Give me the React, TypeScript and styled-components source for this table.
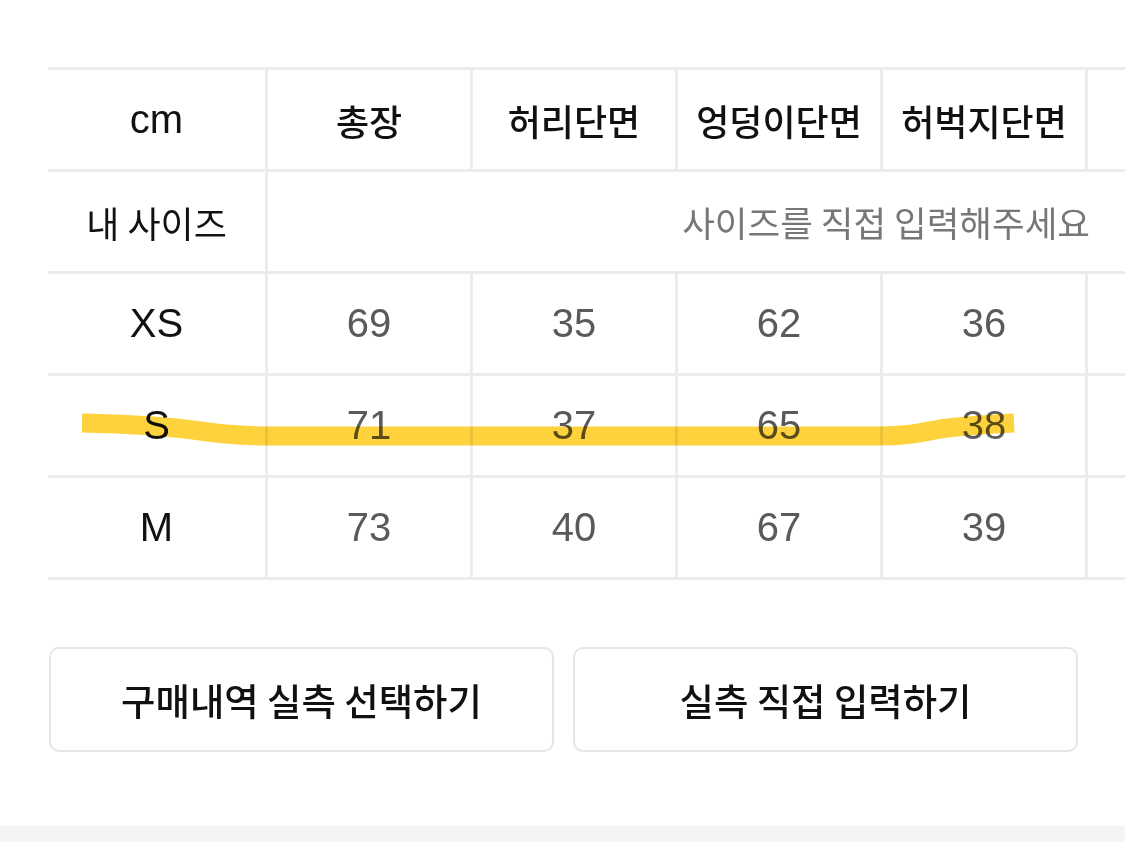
import React from "react";
import styled, { createGlobalStyle } from "styled-components";

const Global = createGlobalStyle`
  html, body {
    margin: 0;
    padding: 0;
    background: #ffffff;
    overflow: hidden;
  }
  body {
    font-family: "Liberation Sans", "Noto Sans CJK KR", sans-serif;
    color: #111;
  }
`;

const Page = styled.div`
  width: 1125px;
  height: 842px;
  display: flex;
  flex-direction: column;
  overflow: hidden;
`;

const Content = styled.div`
  flex: 1;
  padding-top: 67px;
  display: flex;
  flex-direction: column;
`;

const TableWrap = styled.div`
  position: relative;
  margin-left: 48px;
  width: 1077px;
  overflow: hidden;
`;

const Grid = styled.div`
  display: grid;
  grid-template-columns: 220px repeat(5, 205px);
  border-top: 3px solid #ececec;
  width: max-content;
`;

const Cell = styled.div<{ $latin?: boolean; $head?: boolean; $muted?: boolean; $last?: boolean }>`
  height: 99px;
  display: flex;
  align-items: center;
  justify-content: center;
  border-bottom: 3px solid #ececec;
  border-right: ${(p) => (p.$last ? "none" : "3px solid #ececec")};
  font-family: ${(p) =>
    p.$latin
      ? `"Liberation Sans", "Noto Sans CJK KR", sans-serif`
      : `"Noto Sans CJK KR", sans-serif`};
  font-size: ${(p) => (p.$latin ? "40px" : "36px")};
  font-weight: ${(p) => (p.$head ? 500 : 400)};
  color: ${(p) => (p.$muted ? "#5a5a5a" : "#111")};
  white-space: nowrap;
  overflow: hidden;
`;

const SpanCell = styled.div`
  grid-column: 2 / -1;
  height: 99px;
  display: flex;
  align-items: center;
  justify-content: flex-end;
  padding-right: 203px;
  border-bottom: 3px solid #ececec;
  font-family: "Noto Sans CJK KR", sans-serif;
  font-size: 35.5px;
  color: #777;
  white-space: nowrap;
`;

const Highlight = styled.svg`
  position: absolute;
  left: 0;
  top: 0;
  width: 1077px;
  height: 520px;
  pointer-events: none;
  mix-blend-mode: multiply;
`;

const Buttons = styled.div`
  display: grid;
  grid-template-columns: 505px 505px;
  column-gap: 19px;
  margin: 67px 0 0 49px;
`;

const Button = styled.button`
  height: 105px;
  background: #fff;
  border: 2px solid #e6e6e6;
  border-radius: 10px;
  font-family: "Noto Sans CJK KR", sans-serif;
  font-size: 37.4px;
  font-weight: 500;
  color: #111;
  display: flex;
  align-items: center;
  justify-content: center;
  padding: 0;
  cursor: pointer;
`;

const BottomBand = styled.div`
  height: 16px;
  background: #f4f4f4;
`;

const headers = ["총장", "허리단면", "엉덩이단면", "허벅지단면", ""];
const rows: { label: string; values: string[] }[] = [
  { label: "XS", values: ["69", "35", "62", "36", ""] },
  { label: "S", values: ["71", "37", "65", "38", ""] },
  { label: "M", values: ["73", "40", "67", "39", ""] },
];

export default function App() {
  return (
    <>
      <Global />
      <Page>
        <Content>
          <TableWrap>
            <Grid>
              <Cell $latin $head>cm</Cell>
              {headers.map((h, i) => (
                <Cell key={i} $head $last={i === headers.length - 1}>
                  {h}
                </Cell>
              ))}
              <Cell>내 사이즈</Cell>
              <SpanCell>사이즈를 직접 입력해주세요</SpanCell>
              {rows.map((r) => (
                <React.Fragment key={r.label}>
                  <Cell $latin>{r.label}</Cell>
                  {r.values.map((v, i) => (
                    <Cell key={i} $latin $muted $last={i === r.values.length - 1}>
                      {v}
                    </Cell>
                  ))}
                </React.Fragment>
              ))}
            </Grid>
            <Highlight viewBox="0 0 1077 520">
              <path
                d="M34 356 C 80 357, 115 359, 145 363 C 172 367, 190 369, 220 369 L 832 369 C 858 369, 870 366, 892 362 C 920 358, 945 357, 966 356"
                fill="none"
                stroke="#fdd23c"
                strokeWidth="19"
                strokeLinecap="butt"
                strokeLinejoin="round"
              />
            </Highlight>
          </TableWrap>
          <Buttons>
            <Button>구매내역 실측 선택하기</Button>
            <Button>실측 직접 입력하기</Button>
          </Buttons>
        </Content>
        <BottomBand />
      </Page>
    </>
  );
}
